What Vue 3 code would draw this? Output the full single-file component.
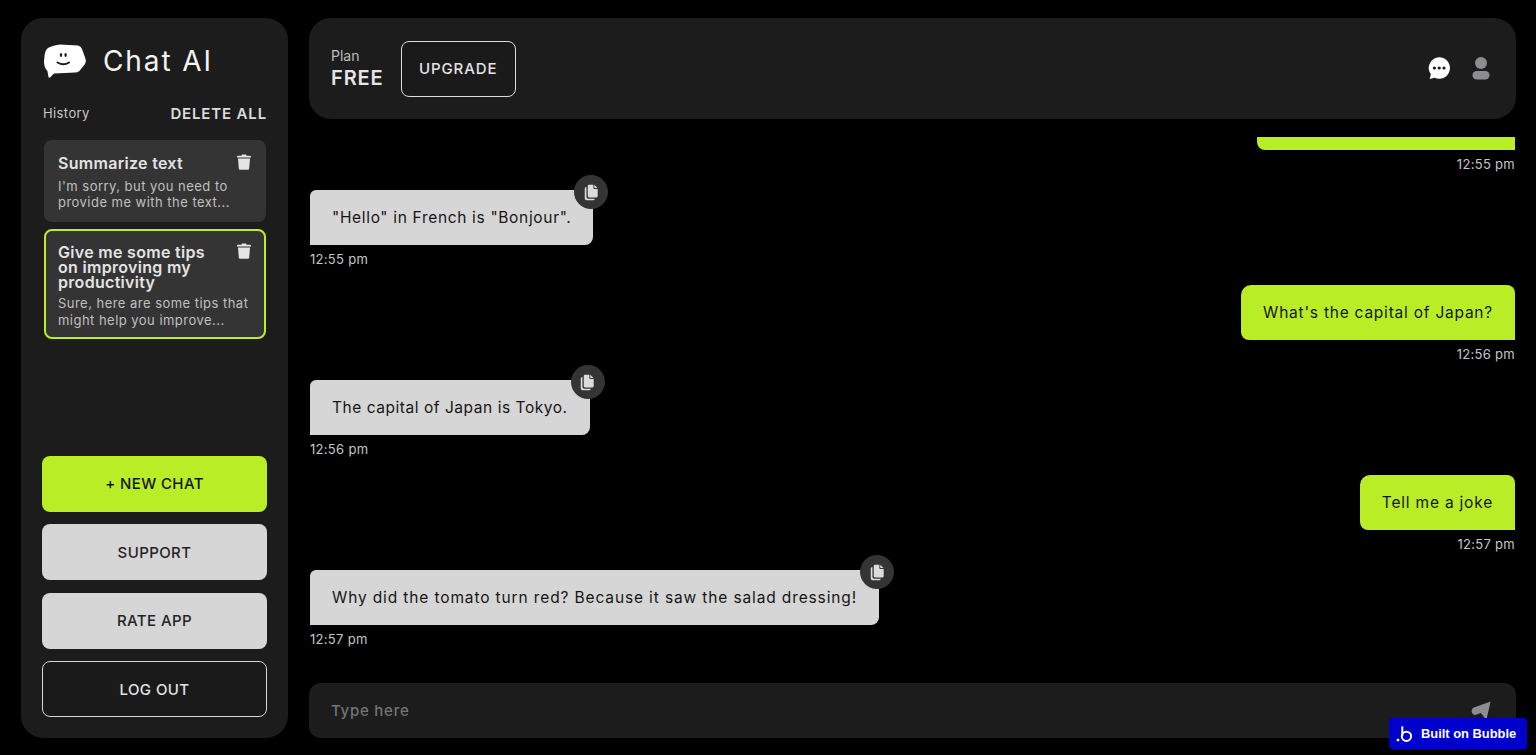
<script setup>
const history = [
  { title: 'Summarize text', text: ["I'm sorry, but you need to", 'provide me with the text...'], active: false },
  { title: 'Give me some tips on improving my productivity', text: ['Sure, here are some tips that', 'might help you improve...'], active: true },
]
const messages = [
  { me: true, text: '', time: '12:55 pm', clipped: true, spacing: 0.87 },
  { me: false, text: '"Hello" in French is "Bonjour".', time: '12:55 pm', spacing: 0.67 },
  { me: true, text: "What's the capital of Japan?", time: '12:56 pm', spacing: 0.77 },
  { me: false, text: 'The capital of Japan is Tokyo.', time: '12:56 pm', spacing: 0.54 },
  { me: true, text: 'Tell me a joke', time: '12:57 pm', spacing: 0.8 },
  { me: false, text: 'Why did the tomato turn red? Because it saw the salad dressing!', time: '12:57 pm', spacing: 0.87 },
]
</script>

<template>
  <div class="page">
    <aside class="sidebar">
      <div class="brand">
        <svg class="logo" viewBox="0 0 42 36" width="42" height="36">
          <path d="M.6 13 Q1.4 6.5 6 5 Q10 3 16 2.4 L34 3.4 Q37 4 38 7 L41.6 17 Q42.4 20 40.6 22.4 L35.4 29 Q33.5 30.6 31 30.6 L10 31.4 L6 35.6 Q4.6 36.4 4.4 34.6 L3.4 29 Q.2 26 0 20 Z" fill="#fff"/>
          <ellipse cx="17" cy="13" rx="1.2" ry="2" fill="#1c1c1c"/>
          <ellipse cx="21.6" cy="13" rx="1.2" ry="2" fill="#1c1c1c"/>
          <path d="M13.5 20.5 Q19.5 24 25 20.5" fill="none" stroke="#1c1c1c" stroke-width="2" stroke-linecap="round"/>
        </svg>
        <span class="brand-name">Chat AI</span>
      </div>
      <div class="history-head">
        <span class="history-label">History</span>
        <span class="delete-all">DELETE ALL</span>
      </div>
      <div class="history-list">
        <div v-for="h in history" :key="h.title" class="history-card" :class="{ active: h.active }">
          <svg class="trash" viewBox="0 0 14 16" width="14" height="16">
            <path d="M5 0.5h4l0.6 1.3H13.2q.8 0 .8 .9v.8H0v-.8q0-.9 .8-.9H4.4Z M1 4.6h12l-.8 10q-.1 1.2-1.3 1.2H3.1q-1.2 0-1.3-1.2Z" fill="#e4e4e4"/>
          </svg>
          <div class="history-title">{{ h.title }}</div>
          <div class="history-text">
            <div v-for="line in h.text" :key="line">{{ line }}</div>
          </div>
        </div>
      </div>
      <div class="side-actions">
        <button class="btn lime">+ NEW CHAT</button>
        <button class="btn grey">SUPPORT</button>
        <button class="btn grey">RATE APP</button>
        <button class="btn outline">LOG OUT</button>
      </div>
    </aside>

    <main class="main">
      <header class="topbar">
        <div class="plan">
          <span class="plan-label">Plan</span>
          <span class="plan-value">FREE</span>
        </div>
        <button class="upgrade">UPGRADE</button>
        <div class="top-icons">
          <svg viewBox="0 0 24 24" width="24" height="24">
            <path d="M12.2 1.2a10.8 10.8 0 1 1-4.6 20.6L2.6 23l1.3-4.6A10.8 10.8 0 0 1 12.2 1.2Z" fill="#fff"/>
            <circle cx="7.4" cy="12" r="1.6" fill="#1c1c1c"/>
            <circle cx="12.2" cy="12" r="1.6" fill="#1c1c1c"/>
            <circle cx="17" cy="12" r="1.6" fill="#1c1c1c"/>
          </svg>
          <svg viewBox="0 0 22 24" width="22" height="24">
            <circle cx="11" cy="7" r="6" fill="#8d8d8f"/>
            <rect x="2.5" y="15" width="17" height="8.4" rx="4.2" fill="#8d8d8f"/>
          </svg>
        </div>
      </header>

      <section class="chat">
        <div v-for="(m, i) in messages" :key="i" class="message" :class="{ mine: m.me }">
          <div class="bubble" :class="{ clipped: m.clipped }" :style="{ letterSpacing: m.spacing + 'px' }">
            {{ m.text }}
            <span v-if="!m.me" class="copy">
              <svg viewBox="0 0 16 18" width="15" height="17">
                <path d="M2.6 3.4H2Q.8 3.4 .8 4.6v10.6q0 2 2 2h7.4q1.2 0 1.2-1.2v-.4H4.6q-2 0-2-2Z" fill="#dcdcdc"/>
                <path d="M5.4 .6H10v3.6q0 1 1 1h3.6v7.6q0 1.4-1.4 1.4H5.4Q4 14.2 4 12.8V2Q4 .6 5.4 .6Z M11 .8l3.4 3.4H11Z" fill="#dcdcdc"/>
              </svg>
            </span>
          </div>
          <div class="time">{{ m.time }}</div>
        </div>
      </section>

      <div class="composer">
        <span class="placeholder">Type here</span>
        <svg class="send" viewBox="0 0 20 20" width="20" height="20">
          <path d="M19.6 .6 L15.4 19 L9.8 12 L4.2 14 Q.4 13 .6 9.4 Q1 7.4 3 6.6 Z" fill="#8d8d8f"/>
        </svg>
      </div>
    </main>

    <div class="bubble-badge">
      <svg viewBox="0 0 20 20" width="18" height="20">
        <circle cx="2.2" cy="16.8" r="1.6" fill="#fff"/>
        <path d="M7 1.5V12.5" stroke="#fff" stroke-width="2.2" fill="none"/>
        <circle cx="11.6" cy="12.6" r="5.2" stroke="#fff" stroke-width="2.2" fill="none"/>
      </svg>
      <span>Built on Bubble</span>
    </div>
  </div>
</template>

<style>
html, body { margin: 0; background: #000; }
</style>

<style scoped>
.page {
  height: 755px;
  box-sizing: border-box;
  padding: 18px 20px 17px 21px;
  display: flex;
  gap: 21px;
  background: #000;
  color: #fff;
  font-family: Inter, "Noto Sans", "Liberation Sans", sans-serif;
  overflow: hidden;
}
.sidebar {
  width: 267px;
  flex: none;
  box-sizing: border-box;
  padding: 24px 21px 21px;
  background: #1c1c1c;
  border-radius: 22px;
  display: flex;
  flex-direction: column;
}
.brand { display: flex; align-items: center; gap: 17px; height: 36px; margin-left: 2px; }
.logo { flex: none; }
.brand-name { font-size: 28px; letter-spacing: 1.9px; font-weight: 400; color: #f4f4f4; margin-top: 1px; }
.history-head {
  margin-top: 25px;
  display: flex;
  justify-content: space-between;
  align-items: center;
  height: 20px;
}
.history-label { font-size: 13px; letter-spacing: .4px; color: #c8c8c8; margin-left: 1px; }
.delete-all { font-size: 15px; font-weight: 600; letter-spacing: .85px; color: #dcdcdc; }
.history-list {
  margin: 17px 1px 0 2px;
  display: flex;
  flex-direction: column;
  gap: 7px;
}
.history-card {
  position: relative;
  box-sizing: border-box;
  background: #343434;
  border: 2px solid #343434;
  border-radius: 8px;
  padding: 14px 12px 9.5px;
}
.history-card.active { border-color: #b9ee27; padding-bottom: 9px; }
.history-title {
  font-size: 16px;
  line-height: 15px;
  font-weight: 600;
  letter-spacing: .3px;
  color: #e4e4e4;
  width: 158px;
}
.history-text { margin-top: 6.5px; font-size: 13px; line-height: 16.5px; color: #c0c0c0; letter-spacing: .47px; white-space: nowrap; }
.active .history-text { margin-top: 5px; }
.trash { position: absolute; right: 13px; top: 12px; }
.side-actions { margin-top: auto; display: flex; flex-direction: column; gap: 12.5px; }
.btn {
  height: 56px;
  border-radius: 8px;
  border: 0;
  font-family: inherit;
  font-size: 15px;
  font-weight: 500;
  letter-spacing: .4px;
  padding: 0;
}
.lime { background: #b9ee27; color: #151515; }
.grey { background: #d6d6d6; color: #232323; }
.outline { background: #1a1a1a; color: #e2e2e2; border: 1.5px solid #d6d6d6; }
.main { flex: 1; min-width: 0; display: flex; flex-direction: column; }
.topbar {
  height: 101px;
  flex: none;
  box-sizing: border-box;
  background: #1c1c1c;
  border-radius: 22px;
  padding: 0 22px;
  display: flex;
  align-items: center;
}
.plan { display: flex; flex-direction: column; }
.plan-label { font-size: 14px; line-height: 18px; color: #bdbdbd; margin-bottom: 1px; }
.plan-value { font-size: 20px; line-height: 24px; font-weight: 600; color: #e6e6e6; letter-spacing: .9px; }
.upgrade {
  margin-left: 17px;
  width: 115px;
  height: 56px;
  background: #1a1a1a;
  color: #e4e4e4;
  border: 1.5px solid #dcdcdc;
  border-radius: 8px;
  font-family: inherit;
  font-size: 15px;
  font-weight: 500;
  letter-spacing: .9px;
  padding: 0;
}
.top-icons { margin-left: auto; display: flex; align-items: center; gap: 19px; margin-right: 2px; margin-top: -1px; }
.chat {
  flex: 1;
  min-height: 0;
  margin-top: 18px;
  overflow: hidden;
  display: flex;
  flex-direction: column;
  justify-content: flex-end;
  padding-bottom: 18px;
}
.message { display: flex; flex-direction: column; align-items: flex-start; height: 95px; flex: none; padding-left: 1px; }
.message.mine { align-items: flex-end; padding-right: 1px; padding-left: 0; }
.bubble {
  position: relative;
  box-sizing: border-box;
  height: 55px;
  padding: 0 22px;
  line-height: 55px;
  font-size: 15.5px;
  background: #d6d6d6;
  color: #151515;
  border-radius: 6px 8px 8px 0;
  white-space: nowrap;
}
.message.mine .bubble { background: #b9ee27; border-radius: 10px 8px 0 8px; }
.bubble.clipped { width: 258px; }
.copy {
  position: absolute;
  right: -15px;
  top: -15px;
  width: 34px;
  height: 34px;
  border-radius: 50%;
  background: #343434;
  display: flex;
  align-items: center;
  justify-content: center;
}
.time { margin-top: 6px; font-size: 13px; line-height: 17px; letter-spacing: .3px; color: #c6c6c6; }
.composer {
  height: 55px;
  flex: none;
  box-sizing: border-box;
  background: #1c1c1c;
  border-radius: 12px;
  padding: 0 25px 0 22px;
  display: flex;
  align-items: center;
  justify-content: space-between;
}
.placeholder { font-size: 15px; letter-spacing: .75px; color: #757575; font-weight: 500; }
.bubble-badge {
  position: fixed;
  left: 1389px;
  top: 718px;
  width: 138px;
  height: 31px;
  box-sizing: border-box;
  padding-left: 7px;
  background: #0000cc;
  border-radius: 3px;
  display: flex;
  align-items: center;
  gap: 7px;
  font-family: "Liberation Sans", Arial, sans-serif;
  font-size: 12.9px;
  font-weight: 700;
  color: #fff;
}
</style>
